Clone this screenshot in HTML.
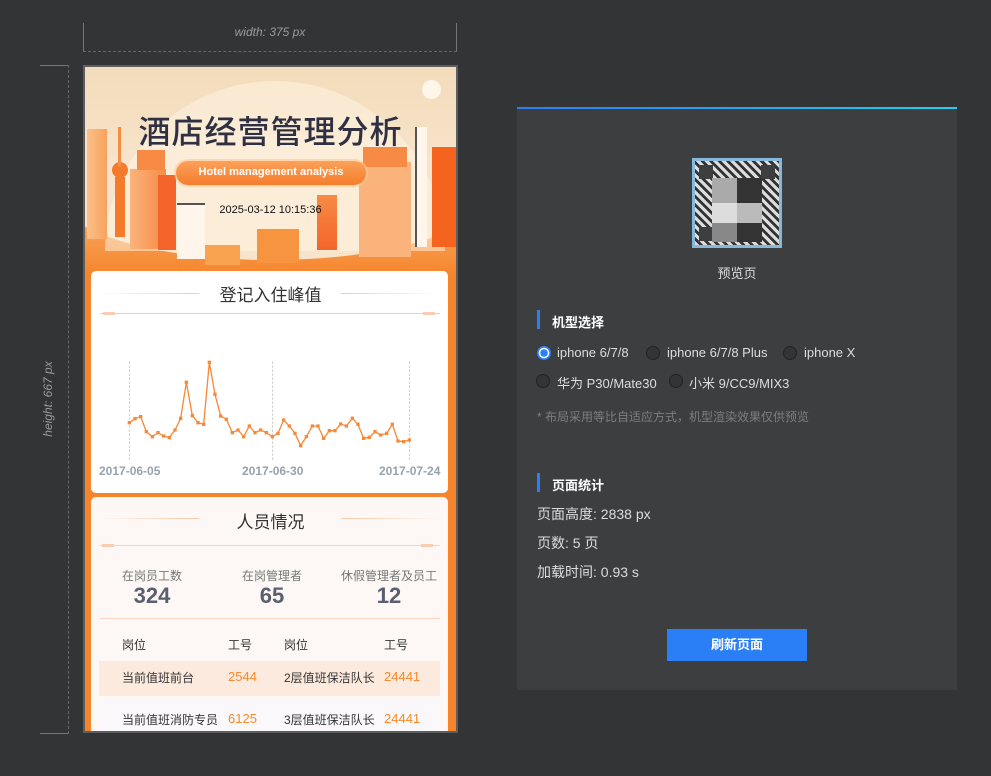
<!DOCTYPE html>
<html><head><meta charset="utf-8"><style>
*{margin:0;padding:0;box-sizing:border-box}
body{width:991px;height:776px;background:#333436;font-family:"Liberation Sans","Noto Sans CJK SC",sans-serif;position:relative;overflow:hidden}
.a{position:absolute}
.t{white-space:nowrap}
</style></head><body>
<!-- rulers -->
<div class="a" style="left:83px;top:23px;width:1px;height:29px;background:#777"></div>
<div class="a" style="left:456px;top:23px;width:1px;height:29px;background:#777"></div>
<div class="a" style="left:83px;top:51px;width:374px;border-top:1px dashed #666"></div>
<div class="a t" style="left:83px;top:25px;width:374px;text-align:center;color:#9a9a9a;font-size:12px;font-style:italic">width: 375 px</div>
<div class="a" style="left:40px;top:65px;width:29px;height:1px;background:#777"></div>
<div class="a" style="left:40px;top:733px;width:29px;height:1px;background:#777"></div>
<div class="a" style="left:68px;top:65px;height:669px;border-left:1px dashed #666"></div>
<div class="a t" style="left:-2px;top:392px;width:100px;text-align:center;color:#9a9a9a;font-size:12px;font-style:italic;transform:rotate(-90deg)">height: 667 px</div>

<!-- phone -->
<div class="a" style="left:83px;top:65px;width:375px;height:668px;border:2px solid #5e5e5e;background:#f5842b;overflow:hidden">
 <div class="a" style="left:0;top:150px;width:371px;height:60px;background:linear-gradient(#f8a860,#f5842b)"></div>
 <div class="a" style="left:0;top:0;width:371px;height:131px;background:linear-gradient(#f3dcbb,#f8e6cf)"></div>
 <div class="a" style="left:-24px;top:67px;width:420px;height:126px;border-radius:50%;background:#f8e4cc"></div>
 <div class="a" style="left:20px;top:14px;width:340px;height:170px;border-radius:170px 170px 0 0;background:rgba(255,245,230,.5)"></div>
 <div class="a" style="left:337px;top:13px;width:19px;height:19px;border-radius:50%;background:#fff6ea"></div>
 <!-- buildings -->
 <div class="a" style="left:2px;top:62px;width:20px;height:110px;background:linear-gradient(90deg,#fbc08a,#f8a25c)"></div>
 <div class="a" style="left:30px;top:110px;width:10px;height:60px;background:#f47a2c"></div>
 <div class="a" style="left:27px;top:95px;width:16px;height:16px;border-radius:50%;background:#f47a2c"></div>
 <div class="a" style="left:33px;top:60px;width:3px;height:40px;background:#f58e45"></div>
 <div class="a" style="left:45px;top:102px;width:36px;height:80px;background:linear-gradient(90deg,#fbb37c,#f78b46)"></div>
 <div class="a" style="left:52px;top:83px;width:28px;height:20px;background:#f78b46"></div>
 <div class="a" style="left:73px;top:108px;width:18px;height:75px;background:#f3652a"></div>
 <div class="a" style="left:92px;top:136px;width:28px;height:56px;background:#fff5ea;border-top:2px solid #555"></div>
 <div class="a" style="left:120px;top:178px;width:35px;height:20px;background:#f9a24f"></div>
 <div class="a" style="left:172px;top:162px;width:42px;height:34px;background:#f79440"></div>
 <div class="a" style="left:232px;top:128px;width:20px;height:55px;background:linear-gradient(#f78b46,#f3652a)"></div>
 <div class="a" style="left:274px;top:95px;width:52px;height:95px;background:#fbb37c"></div>
 <div class="a" style="left:278px;top:80px;width:44px;height:20px;background:#f78b46"></div>
 <div class="a" style="left:330px;top:60px;width:12px;height:120px;background:#fff5ea;border-left:2px solid #555"></div>
 <div class="a" style="left:347px;top:80px;width:24px;height:100px;background:#f4641f"></div>
 <div class="a t" style="left:0;top:40px;width:371px;text-align:center;font-size:32px;color:#2f3042;font-weight:500;letter-spacing:1px">酒店经营管理分析</div>
 <div class="a t" style="left:91px;top:94px;width:190px;height:24px;border-radius:12px;background:linear-gradient(#fca15a,#f57d2c);color:#fff;font-size:11px;font-weight:bold;text-align:center;line-height:23px;box-shadow:0 0 0 2px rgba(255,200,150,.6)">Hotel management analysis</div>
 <div class="a t" style="left:0;top:137px;width:371px;text-align:center;font-size:11px;color:#111">2025-03-12 10:15:36</div>

 <!-- card 1 -->
 <div class="a" style="left:6px;top:204px;width:357px;height:222px;background:#fff;border-radius:5px"></div>
 <div class="a" style="left:14px;top:226px;width:100px;height:1px;background:linear-gradient(90deg,#fff,#f9c8a6)"></div>
 <div class="a" style="left:256px;top:226px;width:100px;height:1px;background:linear-gradient(90deg,#f9c8a6,#fff)"></div>
 <div class="a t" style="left:0;top:214px;width:371px;text-align:center;font-size:17px;color:#333">登记入住峰值</div>
 <div class="a" style="left:15px;top:246px;width:340px;height:1px;background:#f9cbb0"></div>
 <div class="a" style="left:18px;top:245px;width:12px;height:3px;background:#f9cbb0"></div>
 <div class="a" style="left:338px;top:245px;width:12px;height:3px;background:#f9cbb0"></div>
 <!-- card 2 -->
 <div class="a" style="left:6px;top:430px;width:357px;height:240px;background:#fdf8f5;border-radius:5px"></div>
</div>

<svg class="a" style="left:83px;top:330px" width="375" height="400" viewBox="0 0 1125 1200">
 <g stroke="#aaa" stroke-width="2" stroke-dasharray="6,6"><line x1="139" y1="95" x2="139" y2="390"/><line x1="568" y1="95" x2="568" y2="390"/><line x1="979" y1="95" x2="979" y2="390"/></g>
 <polyline fill="none" stroke="#f7893a" stroke-width="4" points="139,278 156,266 173,260 190,305 208,320 225,308 242,318 259,323 276,300 293,265 310,157 328,257 345,278 362,283 379,97 396,193 413,258 430,268 448,308 465,300 482,320 499,288 516,308 533,300 550,308 568,320 585,310 602,270 619,288 636,310 653,347 670,320 688,288 705,288 722,325 739,302 756,302 773,282 790,288 808,265 825,283 842,325 859,322 876,305 893,315 911,310 928,283 945,333 962,335 979,330"/>
 <path fill="none" stroke="#f7893a" stroke-width="10" stroke-linecap="square" d="M139 278h0M156 266h0M173 260h0M190 305h0M208 320h0M225 308h0M242 318h0M259 323h0M276 300h0M293 265h0M310 157h0M328 257h0M345 278h0M362 283h0M379 97h0M396 193h0M413 258h0M430 268h0M448 308h0M465 300h0M482 320h0M499 288h0M516 308h0M533 300h0M550 308h0M568 320h0M585 310h0M602 270h0M619 288h0M636 310h0M653 347h0M670 320h0M688 288h0M705 288h0M722 325h0M739 302h0M756 302h0M773 282h0M790 288h0M808 265h0M825 283h0M842 325h0M859 322h0M876 305h0M893 315h0M911 310h0M928 283h0M945 333h0M962 335h0M979 330h0"/>
</svg>
<div class="a t" style="left:99px;top:464px;font-size:12px;font-weight:bold;color:#98a2ae">2017-06-05</div>
<div class="a t" style="left:242px;top:464px;font-size:12px;font-weight:bold;color:#98a2ae">2017-06-30</div>
<div class="a t" style="left:379px;top:464px;font-size:12px;font-weight:bold;color:#98a2ae">2017-07-24</div>

<div class="a" style="left:99px;top:518px;width:100px;height:1px;background:linear-gradient(90deg,#fdf8f5,#f9c8a6)"></div>
<div class="a" style="left:341px;top:518px;width:100px;height:1px;background:linear-gradient(90deg,#f9c8a6,#fdf8f5)"></div>
<div class="a t" style="left:85px;top:508px;width:371px;text-align:center;font-size:17px;color:#333">人员情况</div>
<div class="a" style="left:100px;top:545px;width:340px;height:1px;background:#f9d3bd"></div>
<div class="a" style="left:102px;top:544px;width:12px;height:3px;background:#f9cbb0"></div>
<div class="a" style="left:421px;top:544px;width:12px;height:3px;background:#f9cbb0"></div>
<div class="a t" style="left:102px;top:567px;width:100px;text-align:center;font-size:12px;color:#777">在岗员工数</div>
<div class="a t" style="left:222px;top:567px;width:100px;text-align:center;font-size:12px;color:#777">在岗管理者</div>
<div class="a t" style="left:339px;top:567px;width:100px;text-align:center;font-size:12px;color:#777">休假管理者及员工</div>
<div class="a t" style="left:102px;top:583px;width:100px;text-align:center;font-size:22px;font-weight:bold;color:#5b5e70">324</div>
<div class="a t" style="left:222px;top:583px;width:100px;text-align:center;font-size:22px;font-weight:bold;color:#5b5e70">65</div>
<div class="a t" style="left:339px;top:583px;width:100px;text-align:center;font-size:22px;font-weight:bold;color:#5b5e70">12</div>
<div class="a" style="left:100px;top:618px;width:340px;height:1px;background:#f9d3bd"></div>
<div class="a t" style="left:122px;top:636px;font-size:12px;color:#333">岗位</div>
<div class="a t" style="left:228px;top:636px;font-size:12px;color:#333">工号</div>
<div class="a t" style="left:284px;top:636px;font-size:12px;color:#333">岗位</div>
<div class="a t" style="left:384px;top:636px;font-size:12px;color:#333">工号</div>
<div class="a" style="left:99px;top:661px;width:341px;height:35px;background:#fdeade"></div>
<div class="a" style="left:99px;top:700px;width:341px;height:31px;background:#faf8fa"></div>
<div class="a t" style="left:122px;top:669px;font-size:12px;color:#333">当前值班前台</div>
<div class="a t" style="left:228px;top:668px;font-size:13px;line-height:17px;color:#f7892a">2544</div>
<div class="a t" style="left:284px;top:669px;font-size:12px;color:#333">2层值班保洁队长</div>
<div class="a t" style="left:384px;top:668px;font-size:13px;line-height:17px;color:#f7892a">24441</div>
<div class="a t" style="left:122px;top:711px;font-size:12px;color:#333">当前值班消防专员</div>
<div class="a t" style="left:228px;top:710px;font-size:13px;line-height:17px;color:#f7892a">6125</div>
<div class="a t" style="left:284px;top:711px;font-size:12px;color:#333">3层值班保洁队长</div>
<div class="a t" style="left:384px;top:710px;font-size:13px;line-height:17px;color:#f7892a">24441</div>

<!-- right panel -->
<div class="a" style="left:517px;top:107px;width:440px;height:583px;background:#3d3e40;border-top:2px solid;border-image:linear-gradient(90deg,#2f7bf5,#1fd0ee) 1"></div>
<div class="a" style="left:692px;top:158px;width:90px;height:90px;border:3px solid #86b8dc;background:
 linear-gradient(#3d3e40,#3d3e40) 4px 4px/14px 14px no-repeat,
 linear-gradient(#3d3e40,#3d3e40) 66px 4px/14px 14px no-repeat,
 linear-gradient(#3d3e40,#3d3e40) 4px 66px/14px 14px no-repeat,
 repeating-linear-gradient(45deg,#ddd 0 3px,#333 3px 6px)"></div>
<div class="a" style="left:712px;top:178px;width:50px;height:64px;background:
 linear-gradient(90deg,#aaa 50%,#333 50%) 0 0/100% 25px no-repeat,
 linear-gradient(90deg,#ddd 50%,#bbb 50%) 0 25px/100% 20px no-repeat,
 linear-gradient(90deg,#888 50%,#333 50%) 0 45px/100% 19px no-repeat"></div>
<div class="a t" style="left:517px;top:263px;width:440px;text-align:center;font-size:13px;color:#ddd">预览页</div>
<div class="a" style="left:537px;top:310px;width:3px;height:19px;background:#2b7ff6"></div>
<div class="a t" style="left:552px;top:312px;font-size:13px;color:#fff;font-weight:bold">机型选择</div>
<div class="a" style="left:537px;top:346px;width:14px;height:14px;border-radius:50%;border:1px solid #2b7ff6;background:radial-gradient(#2b7ff6 3.5px,#fff 4px,#fff 5px,#2b7ff6 5.5px)"></div>
<div class="a t" style="left:557px;top:345px;font-size:13px;color:#ddd">iphone 6/7/8</div>
<div class="a" style="left:646px;top:346px;width:14px;height:14px;border-radius:50%;border:1px solid #222;background:#333436"></div>
<div class="a t" style="left:667px;top:345px;font-size:13px;color:#ddd">iphone 6/7/8 Plus</div>
<div class="a" style="left:783px;top:346px;width:14px;height:14px;border-radius:50%;border:1px solid #222;background:#333436"></div>
<div class="a t" style="left:804px;top:345px;font-size:13px;color:#ddd">iphone X</div>
<div class="a" style="left:536px;top:374px;width:14px;height:14px;border-radius:50%;border:1px solid #222;background:#333436"></div>
<div class="a t" style="left:557px;top:373px;font-size:13px;color:#ddd">华为 P30/Mate30</div>
<div class="a" style="left:669px;top:374px;width:14px;height:14px;border-radius:50%;border:1px solid #222;background:#333436"></div>
<div class="a t" style="left:689px;top:373px;font-size:13px;color:#ddd">小米 9/CC9/MIX3</div>
<div class="a t" style="left:537px;top:408px;font-size:12px;color:#7d7e80">* 布局采用等比自适应方式，机型渲染效果仅供预览</div>
<div class="a" style="left:537px;top:473px;width:3px;height:19px;background:#2b7ff6"></div>
<div class="a t" style="left:552px;top:475px;font-size:13px;color:#fff;font-weight:bold">页面统计</div>
<div class="a t" style="left:537px;top:504px;font-size:14px;color:#ddd">页面高度: 2838 px</div>
<div class="a t" style="left:537px;top:533px;font-size:14px;color:#ddd">页数: 5 页</div>
<div class="a t" style="left:537px;top:562px;font-size:14px;color:#ddd">加载时间: 0.93 s</div>
<div class="a t" style="left:667px;top:629px;width:140px;height:32px;background:#2b7ff6;color:#fff;font-size:13px;font-weight:bold;text-align:center;line-height:32px">刷新页面</div>
</body></html>
